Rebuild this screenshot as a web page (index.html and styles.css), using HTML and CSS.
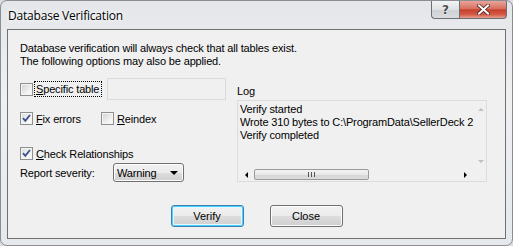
FILE: index.html
```html
<!DOCTYPE html>
<html lang="en">
  <head>
    <meta charset="UTF-8" />
    <meta name="viewport" content="width=device-width, initial-scale=1.0" />
    <title>Database Verification</title>
    <link rel="stylesheet" href="styles.css">
  </head>

  <body>
    <div class="window">
      <div class="titlebar">
        <span class="title">Database Verification</span>
        <div class="caption-buttons">
          <span class="cap-btn help">?</span>
          <span class="cap-btn close">
            <svg width="13" height="11" viewBox="0 0 13 11">
              <path d="M2 1.5 L11 9.5 M11 1.5 L2 9.5" stroke="#4d2222" stroke-width="3.6" stroke-linecap="square" />
              <path d="M2 1.5 L11 9.5 M11 1.5 L2 9.5" stroke="#fff" stroke-width="2" stroke-linecap="square" />
            </svg>
          </span>
        </div>
      </div>

      <div class="client">
        <p class="intro">
          Database verification will always check that all tables exist.<br />
          The following options may also be applied.
        </p>

        <div class="panels">
          <div class="options">
            <div class="row row-specific">
              <label class="check">
                <span class="box"></span>
                <span class="focus"><u>S</u>pecific table</span>
              </label>
              <input class="table-name" type="text" disabled />
            </div>

            <div class="row row-fix">
              <label class="check">
                <span class="box checked">
                  <svg width="9" height="9" viewBox="0 0 9 9"><path d="M1 4.2 L3.3 6.8 L8 1" fill="none" stroke="#3d4f8f" stroke-width="1.8" /></svg>
                </span>
                <span><u>F</u>ix errors</span>
              </label>
              <label class="check reindex">
                <span class="box"></span>
                <span><u>R</u>eindex</span>
              </label>
            </div>

            <div class="row row-relations">
              <label class="check">
                <span class="box checked">
                  <svg width="9" height="9" viewBox="0 0 9 9"><path d="M1 4.2 L3.3 6.8 L8 1" fill="none" stroke="#3d4f8f" stroke-width="1.8" /></svg>
                </span>
                <span><u>C</u>heck Relationships</span>
              </label>
            </div>

            <div class="row row-severity">
              <span class="severity-label">Report severity:</span>
              <div class="combo">
                <span>Warning</span>
                <span class="combo-arrow"></span>
              </div>
            </div>
          </div>

          <div class="log">
            <div class="log-label">Log</div>
            <div class="log-box">
              <div class="log-lines">
                <div>Verify started</div>
                <div>Wrote 310 bytes to C:\ProgramData\SellerDeck 2</div>
                <div>Verify completed</div>
              </div>
              <div class="vscroll">
                <span class="arrow up"></span>
                <span class="arrow down"></span>
              </div>
              <div class="hscroll">
                <span class="arrow left"></span>
                <span class="thumb"><span class="grip"></span></span>
                <span class="arrow right"></span>
              </div>
              <div class="corner"></div>
            </div>
          </div>
        </div>

        <div class="actions">
          <button class="btn default">Verify</button>
          <button class="btn">Close</button>
        </div>
      </div>
    </div>
  </body>
</html>
```

FILE: styles.css
```css
body {
  margin: 0;
  font-family: "Liberation Sans", Arial, sans-serif;
  font-size: 11px;
  letter-spacing: -0.15px;
  color: #000;
  background-color: #d9dde2;
}

.window {
  width: 513px;
  height: 246px;
  box-sizing: border-box;
  border: 1px solid #8a8d91;
  border-radius: 7px;
  padding: 0 6px 6px 6px;
  background: linear-gradient(180deg, #e4e6e9 0%, #eef0f2 40%, #e6e9ec 100%);
  display: flex;
  flex-direction: column;
}

/* title bar */
.titlebar {
  height: 28px;
  display: flex;
  align-items: flex-start;
}

.title {
  margin: 6px 0 0 1px;
  font-family: "Open Sans", "Noto Sans", sans-serif;
  font-size: 12px;
  letter-spacing: -0.2px;
  text-shadow: 0 0 6px #fff, 0 0 3px #fff;
}

.caption-buttons {
  margin-left: auto;
  margin-right: -1px;
  display: flex;
}

.cap-btn {
  height: 18px;
  box-sizing: border-box;
  display: flex;
  align-items: center;
  justify-content: center;
  border: 1px solid #6b6e73;
  border-top: none;
}

.help {
  width: 28px;
  border-right: none;
  border-radius: 0 0 0 4px;
  background: linear-gradient(180deg, #f2f3f4 0%, #dfe1e4 50%, #cdd0d4 51%, #d9dcdf 100%);
  font-family: "DejaVu Sans", sans-serif;
  font-size: 12px;
  font-weight: bold;
  color: #4a4a4a;
  text-shadow: 0 0 1px #fff, 0 0 2px #fff;
}

.close {
  width: 48px;
  border-radius: 0 0 4px 0;
  background: linear-gradient(180deg, #e8a59b 0%, #d8705f 45%, #c7402c 52%, #d35b47 80%, #e8a090 100%);
}

/* client area */
.client {
  flex: 1;
  border: 1px solid #707070;
  background-color: #f0f0f0;
  padding: 12px 17px 0 12px;
}

.intro {
  margin: 0;
  line-height: 13px;
}

.panels {
  margin-top: 10px;
  display: flex;
  gap: 11px;
}

.options {
  width: 206px;
  display: flex;
  flex-direction: column;
}

.row {
  display: flex;
  align-items: center;
  white-space: nowrap;
}

.row-specific {
  height: 22px;
}

.row-fix {
  margin-top: 10px;
  height: 17px;
}

.row-relations {
  margin-top: 18px;
  height: 17px;
}

.row-severity {
  margin-top: 1px;
  height: 19px;
}

.check {
  display: flex;
  align-items: center;
  gap: 3px;
  flex-shrink: 0;
}

.box {
  width: 13px;
  height: 13px;
  box-sizing: border-box;
  border: 1px solid #8e8f8f;
  background: linear-gradient(135deg, #cfd0d1 0%, #f4f4f4 70%, #fbfbfb 100%);
  box-shadow: inset 0 0 0 1px #f4f4f4;
  display: flex;
  align-items: center;
  justify-content: center;
  flex-shrink: 0;
}

.box.checked {
  background: linear-gradient(135deg, #dadbdc 0%, #f6f6f6 70%, #ffffff 100%);
}

.focus {
  outline: 1px dotted #000;
  outline-offset: 1px;
  padding-right: 1px;
}

.table-name {
  margin-left: auto;
  width: 119px;
  height: 22px;
  box-sizing: border-box;
  border: 1px solid #dadada;
  background-color: #f0f0f0;
  flex-shrink: 0;
}

.reindex {
  margin-left: 20px;
}

.severity-label {
  width: 93px;
}

.combo {
  width: 71px;
  height: 19px;
  box-sizing: border-box;
  border: 1px solid #707070;
  border-radius: 3px;
  background: linear-gradient(180deg, #f2f2f2 0%, #ebebeb 50%, #dddddd 51%, #cfcfcf 100%);
  box-shadow: inset 0 0 0 1px #fcfcfc;
  display: flex;
  align-items: center;
  padding: 0 5px 0 3px;
}

.combo-arrow {
  margin-left: auto;
  width: 0;
  height: 0;
  border-left: 4px solid transparent;
  border-right: 4px solid transparent;
  border-top: 4px solid #000;
}

/* log */
.log {
  width: 250px;
}

.log-label {
  margin-top: 7px;
  margin-bottom: 2px;
  line-height: 13px;
}

.log-box {
  height: 82px;
  box-sizing: border-box;
  border: 1px solid #dcdcdc;
  background-color: #f0f0f0;
  display: grid;
  grid-template-columns: 1fr 10px;
  grid-template-rows: 1fr 13px;
}

.log-lines {
  overflow: hidden;
  white-space: nowrap;
  padding: 2px 0 0 2px;
  line-height: 13px;
}

.vscroll {
  display: flex;
  flex-direction: column;
  justify-content: space-between;
  align-items: center;
  padding: 7px 0 5px;
}

.hscroll {
  display: flex;
  align-items: center;
  padding: 0 9px 0 7px;
}

.corner {
  background-color: #f0f0f0;
}

.arrow {
  width: 0;
  height: 0;
}

.arrow.up {
  border-left: 3px solid transparent;
  border-right: 3px solid transparent;
  border-bottom: 3px solid #c0c0c0;
}

.arrow.down {
  border-left: 3px solid transparent;
  border-right: 3px solid transparent;
  border-top: 3px solid #c0c0c0;
}

.arrow.left {
  border-top: 3px solid transparent;
  border-bottom: 3px solid transparent;
  border-right: 3px solid #000;
}

.arrow.right {
  margin-left: auto;
  border-top: 3px solid transparent;
  border-bottom: 3px solid transparent;
  border-left: 3px solid #000;
}

.thumb {
  margin-left: 6px;
  width: 115px;
  height: 11px;
  box-sizing: border-box;
  border: 1px solid #9a9a9a;
  border-radius: 2px;
  background: linear-gradient(180deg, #f3f3f3 0%, #e8e8e8 50%, #d6d6d6 51%, #dcdcdc 100%);
  display: flex;
  align-items: center;
  justify-content: center;
}

.grip {
  width: 7px;
  height: 5px;
  background: repeating-linear-gradient(90deg, #555 0 1px, transparent 1px 3px);
}

/* buttons */
.actions {
  margin-top: 23px;
  display: flex;
  justify-content: center;
  gap: 26px;
  padding-left: 5px;
}

.btn {
  width: 73px;
  height: 22px;
  font-family: "Liberation Sans", Arial, sans-serif;
  font-size: 11px;
  color: #000;
  border: 1px solid #707070;
  border-radius: 3px;
  background: linear-gradient(180deg, #f2f2f2 0%, #ebebeb 50%, #dddddd 51%, #cfcfcf 100%);
  box-shadow: inset 0 0 0 1px #fcfcfc;
  padding: 0;
}

.btn.default {
  border-color: #3c7fb1;
  box-shadow: inset 0 0 0 1px #48d4ff, inset 0 0 0 2px #e6f7ff;
}
```
